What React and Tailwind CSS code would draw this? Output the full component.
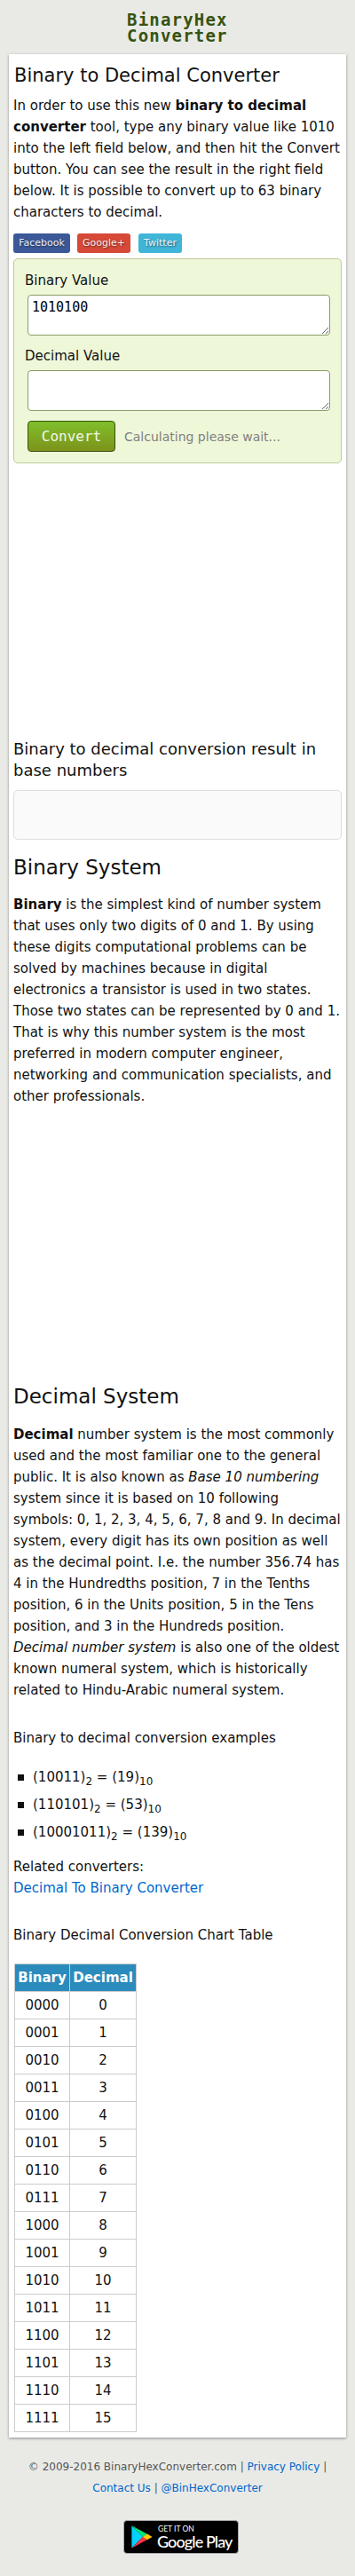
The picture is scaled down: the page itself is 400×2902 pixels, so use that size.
const rows = Array.from({ length: 16 }, (_, n) => [n.toString(2).padStart(4, '0'), n]);

const examples = [
  ['10011', '19'],
  ['110101', '53'],
  ['10001011', '139'],
];

function Social({ className, children }) {
  return (
    <a
      href="#"
      className={`flex h-[22px] items-center justify-center rounded-[3px] text-[11px] leading-[22px] text-white/90 [text-shadow:1px_1px_2px_rgba(0,0,0,0.5)] ${className}`}
    >
      {children}
    </a>
  );
}

function Field({ label, value }) {
  return (
    <div className="flex flex-col">
      <label className="h-6">{label}</label>
      <textarea
        defaultValue={value}
        className="mt-1 ml-[3px] block h-[46px] w-[341px] resize rounded-[4px] border border-[#8a9c66] bg-white px-1 py-1 font-['DejaVu_Sans_Mono',monospace] text-[15px] leading-[18px] text-black"
      />
    </div>
  );
}

function Sub({ children }) {
  return <span className="relative top-[4px] text-[12px] leading-none">{children}</span>;
}

function GooglePlayBadge() {
  return (
    <a href="#" className="ml-[139px] mt-[24px] flex h-[38px] w-[130px] items-center rounded-[4px] border border-[#a6a6a6] bg-black pl-2">
      <svg width="24" height="26" viewBox="0 0 24 26" className="shrink-0">
        <path d="M0.4 0.6 L13 13 L0.4 25.6 Z" fill="#00d2ff" />
        <path d="M0.4 0.2 L17.8 9.8 L13 13.2 Z" fill="#00e878" />
        <path d="M0.4 25.8 L17.8 16 L13 12.8 Z" fill="#ff3344" />
        <path d="M17.8 9.5 L23.6 13 L17.8 16.3 L13 13 Z" fill="#ffcc00" />
      </svg>
      <span className="ml-[5px] flex flex-col whitespace-nowrap font-['Lato',sans-serif] text-white">
        <span className="h-[10px] pl-px text-[8.5px] leading-[10px]">GET IT ON</span>
        <span className="h-[19px] text-[18px] font-medium leading-[18px] tracking-[-0.9px]">Google Play</span>
      </span>
    </a>
  );
}

export default function App() {
  return (
    <div className="h-[2902px] w-[400px] overflow-hidden bg-[#e9eae6] font-['DejaVu_Sans',sans-serif] text-[15px] leading-[24px] text-[#111]">
      <header className="h-[61px] pl-[143px] pt-[13px] font-['DejaVu_Sans_Mono',monospace] text-[19px] font-bold leading-[18px] tracking-[1.2px] text-[#375312]">
        <div>BinaryHex</div>
        <div>Converter</div>
      </header>

      <main className="mx-[10px] flex h-[2685px] flex-col bg-white px-[5px] shadow-[0_1px_3px_rgba(0,0,0,0.4)]">
        <h1 className="mt-[9px] h-[30px] pl-[1px] text-[21px] leading-[30px]">Binary to Decimal Converter</h1>
        <p className="mt-[7px]">
          In order to use this new <b>binary to decimal converter</b> tool, type any binary value like 1010 into the left
          field below, and then hit the Convert button. You can see the result in the right field below. It is possible
          to convert up to 63 binary characters to decimal.
        </p>

        <div className="mt-[12px] flex">
          <Social className="w-[64px] bg-[#3b5998]">Facebook</Social>
          <Social className="ml-[8px] w-[60px] bg-[#d64937]">Google+</Social>
          <Social className="ml-[9px] w-[49px] bg-[#40b5d8]">Twitter</Social>
        </div>

        <form className="mt-[6px] flex h-[231px] flex-col rounded-[5px] border border-[#bccb98] bg-[#eff7d9] pl-3 pt-3">
          <Field label="Binary Value" value="1010100" />
          <div className="mt-[11px]">
            <Field label="Decimal Value" value="" />
          </div>
          <div className="mt-[11px] flex">
            <button
              type="button"
              className="ml-[3px] h-[35px] w-[99px] rounded-[4px] border border-[#375312] bg-linear-to-b from-[#7fbf2b] to-[#7c931b] font-['DejaVu_Sans_Mono',monospace] text-[16px] leading-[33px] text-white/90"
            >
              Convert
            </button>
            <span className="ml-[10px] text-[14px] leading-[36px] text-[#808080]">Calculating please wait...</span>
          </div>
        </form>

        <h3 className="mt-[310px] text-[18px] leading-[24px]">Binary to decimal conversion result in base numbers</h3>
        <div className="mt-[10px] h-[56px] shrink-0 rounded-[5px] border border-[#ddd] bg-[#fafafa]" />

        <h2 className="mt-[16px] h-[30px] text-[23px] leading-[30px]">Binary System</h2>
        <p className="mt-[15px]">
          <b>Binary</b> is the simplest kind of number system that uses only two digits of 0 and 1. By using these digits
          computational problems can be solved by machines because in digital electronics a transistor is used in two
          states. Those two states can be represented by 0 and 1. That is why this number system is the most preferred
          in modern computer engineer, networking and communication specialists, and other professionals.
        </p>

        <h2 className="mt-[311px] h-[30px] text-[23px] leading-[30px]">Decimal System</h2>
        <p className="mt-[16px]">
          <b>Decimal</b> number system is the most commonly used and the most familiar one to the general public. It is
          also known as <i>Base 10 numbering</i> system since it is based on 10 following symbols: 0, 1, 2, 3, 4, 5, 6,
          7, 8 and 9. In decimal system, every digit has its own position as well as the decimal point. I.e. the number
          356.74 has 4 in the Hundredths position, 7 in the Tenths position, 6 in the Units position, 5 in the Tens
          position, and 3 in the Hundreds position. <i>Decimal number system</i> is also one of the oldest known numeral
          system, which is historically related to Hindu-Arabic numeral system.
        </p>

        <p className="mt-[30px]">Binary to decimal conversion examples</p>
        <ul className="mt-[20px] flex flex-col gap-[7px]">
          {examples.map(([bin, dec]) => (
            <li key={bin} className="flex h-6 items-center pl-[5px]">
              <span className="mr-[10px] size-[7px] bg-[#111]" />
              <span>
                ({bin})<Sub>2</Sub> = ({dec})<Sub>10</Sub>
              </span>
            </li>
          ))}
        </ul>
        <p className="mt-[15px]">Related converters:</p>
        <a href="#" className="text-[#0066cc]">
          Decimal To Binary Converter
        </a>
        <p className="mt-[29px]">Binary Decimal Conversion Chart Table</p>

        <table className="ml-[1px] mt-[20px] w-[138px] table-fixed border-collapse text-center">
          <thead>
            <tr className="h-[31px] bg-[#2b8bbc] text-white">
              <th className="w-[62px] border border-[#ccc] p-0 font-bold">Binary</th>
              <th className="w-[75px] border border-[#ccc] p-0 font-bold">Decimal</th>
            </tr>
          </thead>
          <tbody>
            {rows.map(([bin, dec]) => (
              <tr key={bin} className="h-[31px]">
                <td className="border border-[#ccc] p-0">{bin}</td>
                <td className="border border-[#ccc] p-0">{dec}</td>
              </tr>
            ))}
          </tbody>
        </table>
      </main>

      <footer className="pt-[21px]">
        <p className="px-[30px] text-center text-[12px] leading-[24px] text-[#555]">
          © 2009-2016 BinaryHexConverter.com |{' '}
          <a href="#" className="text-[#0066cc]">
            Privacy Policy
          </a>{' '}
          |<br />
          <a href="#" className="text-[#0066cc]">
            Contact Us
          </a>{' '}
          |{' '}
          <a href="#" className="text-[#0066cc]">
            @BinHexConverter
          </a>
        </p>
        <GooglePlayBadge />
      </footer>
    </div>
  );
}
